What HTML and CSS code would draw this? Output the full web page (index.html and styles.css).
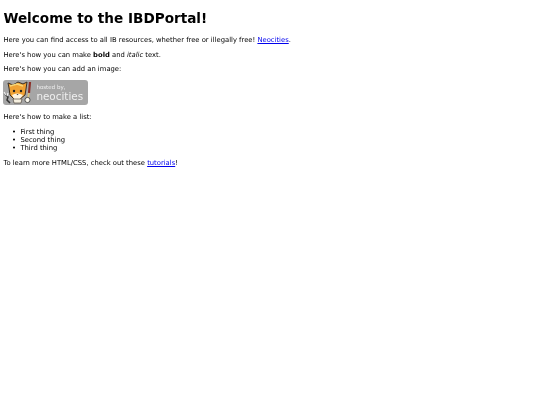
FILE: index.html
```html
<!DOCTYPE html>
<html lang="en">
<head>
    <meta charset="UTF-8">
    <title>The web site of IBDPortal</title>
    <link rel="stylesheet" href="styles.css">
</head>
<body>
    <h1>Welcome to the IBDPortal!</h1>
    <p>Here you can find access to all IB resources, whether free or illegally free! <a href="#">Neocities</a>.</p>
    <p>Here's how you can make <strong>bold</strong> and <em>italic</em> text.</p>
    <p>Here's how you can add an image:</p>
    <div class="badge">
        <svg class="cat" width="30" height="25" viewBox="0 0 30 25">
            <!-- wrench -->
            <path d="M2 14 L5 17 L4 20 L7 23" fill="none" stroke="#333" stroke-width="1.5"/>
            <path d="M1 12 L3 15 M5 13 L4 16" stroke="#eee" stroke-width="1.2"/>
            <!-- head and ears -->
            <path d="M6 8 L5 3 L10 5 L15 2 L20 4 L24 2 L23 9 L22 15 L17 19 L11 19 L7 15 Z" fill="#f0a234" stroke="#3a3026" stroke-width="1"/>
            <path d="M9 15 Q14 12 20 15 L17 19 L11 19 Z" fill="#fff6e2"/>
            <path d="M7 6 L14 4 L20 6" fill="none" stroke="#f8d778" stroke-width="1.6"/>
            <circle cx="11" cy="11" r="1.2" fill="#222"/>
            <circle cx="18" cy="11" r="1.2" fill="#222"/>
            <path d="M13.5 14 L15.5 14 L14.5 15.2 Z" fill="#333"/>
            <!-- body -->
            <path d="M10 19 L19 19 L18 23 L11 23 Z" fill="#f6f0e0" stroke="#3a3026" stroke-width="0.6"/>
            <!-- paint brush -->
            <path d="M27 2 L26 13" stroke="#8c2f28" stroke-width="2.2"/>
            <path d="M26 13 L25 18" stroke="#d8c27a" stroke-width="1.6"/>
            <circle cx="24.5" cy="20" r="2.6" fill="#fbf8ee" stroke="#333" stroke-width="0.8"/>
        </svg>
        <div class="badge-text">
            <span class="hosted">hosted by,</span>
            <span class="neo">neocities</span>
        </div>
    </div>
    <p>Here's how to make a list:</p>
    <ul>
        <li>First thing</li>
        <li>Second thing</li>
        <li>Third thing</li>
    </ul>
    <p>To learn more HTML/CSS, check out these <a href="#">tutorials</a>!</p>
</body>
</html>
```
FILE: styles.css
```css
body {
    font-family: "DejaVu Sans", sans-serif;
    font-size: 6.8px;
    color: #000;
    background-color: #fff;
    margin: 3.4px;
    filter: blur(0.25px);
}
h1 {
    font-size: 13.6px;
    margin: 6.4px 0 10px;
    color: #000;
}
p {
    margin: 6.8px 0;
}
a {
    color: #0000ee;
}
ul {
    margin: 6.8px 0;
    padding-left: 17px;
}
li::marker {
    content: "•  ";
}
.badge {
    display: flex;
    align-items: center;
    width: 85px;
    height: 25px;
    margin: 5.4px 0 8.2px;
    background-color: #a6a6a6;
    border-radius: 3px;
}
.cat {
    flex-shrink: 0;
}
.badge-text {
    display: flex;
    flex-direction: column;
    padding-left: 3px;
    color: #efefef;
}
.hosted {
    font-size: 5.5px;
    line-height: 6px;
}
.neo {
    font-size: 10.4px;
    line-height: 12px;
}
```
